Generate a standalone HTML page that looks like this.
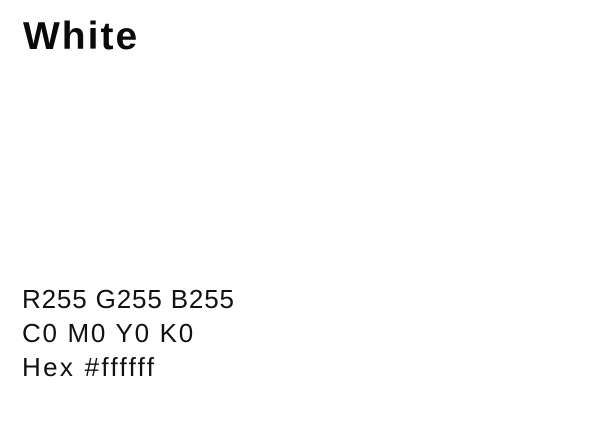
<!DOCTYPE html>
<html><head><style>
html,body{margin:0;padding:0;background:#fff;width:594px;height:434px;overflow:hidden}
body{position:relative;font-family:"Liberation Sans",sans-serif;color:#111}
.t{position:absolute;left:23px;top:14px;font-size:39px;font-weight:bold;line-height:46px;letter-spacing:2px;color:#0a0a0a}
.l{position:absolute;left:22px;font-size:26px;line-height:30px;color:#111}
</style></head><body>
<div class="t">White</div>
<div class="l" style="top:284px;letter-spacing:0.85px">R255 G255 B255</div>
<div class="l" style="top:318px;letter-spacing:1.7px">C0 M0 Y0 K0</div>
<div class="l" style="top:352px;letter-spacing:2.3px">Hex #ffffff</div>
</body></html>
